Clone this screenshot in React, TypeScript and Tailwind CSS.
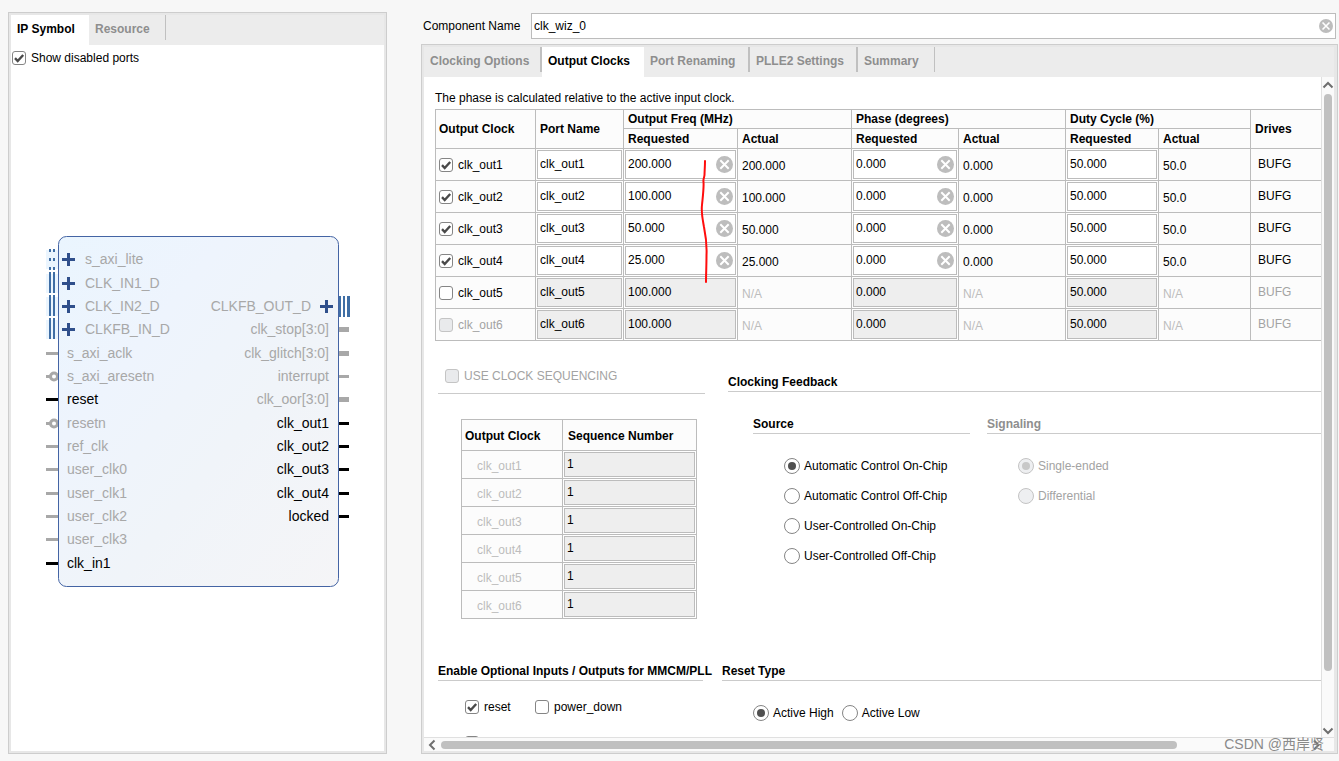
import clsx from 'clsx';
import React, { FC, ReactNode, useId, useState } from 'react';

interface ClockRow {
  name: string;
  checked: boolean;
  enabled: boolean;
  disabledCheck?: boolean;
  freq: string;
}

const clocks: ClockRow[] = [
  { name: 'clk_out1', checked: true, enabled: true, freq: '200.000' },
  { name: 'clk_out2', checked: true, enabled: true, freq: '100.000' },
  { name: 'clk_out3', checked: true, enabled: true, freq: '50.000' },
  { name: 'clk_out4', checked: true, enabled: true, freq: '25.000' },
  { name: 'clk_out5', checked: false, enabled: false, freq: '100.000' },
  { name: 'clk_out6', checked: false, enabled: false, disabledCheck: true, freq: '100.000' },
];

type PortKind = 'bus' | 'dotted' | 'wire' | 'wide' | 'inverted';

interface Port {
  name: string;
  y: number;
  kind: PortKind;
  active?: boolean;
}

const leftPorts: Port[] = [
  { name: 's_axi_lite', y: 23, kind: 'dotted' },
  { name: 'CLK_IN1_D', y: 47, kind: 'bus' },
  { name: 'CLK_IN2_D', y: 70, kind: 'bus' },
  { name: 'CLKFB_IN_D', y: 93, kind: 'bus' },
  { name: 's_axi_aclk', y: 117, kind: 'wire' },
  { name: 's_axi_aresetn', y: 140, kind: 'inverted' },
  { name: 'reset', y: 163, kind: 'wire', active: true },
  { name: 'resetn', y: 187, kind: 'inverted' },
  { name: 'ref_clk', y: 210, kind: 'wire' },
  { name: 'user_clk0', y: 233, kind: 'wire' },
  { name: 'user_clk1', y: 257, kind: 'wire' },
  { name: 'user_clk2', y: 280, kind: 'wire' },
  { name: 'user_clk3', y: 303, kind: 'wire' },
  { name: 'clk_in1', y: 327, kind: 'wire', active: true },
];

const rightPorts: Port[] = [
  { name: 'CLKFB_OUT_D', y: 70, kind: 'bus' },
  { name: 'clk_stop[3:0]', y: 93, kind: 'wide' },
  { name: 'clk_glitch[3:0]', y: 117, kind: 'wide' },
  { name: 'interrupt', y: 140, kind: 'wire' },
  { name: 'clk_oor[3:0]', y: 163, kind: 'wide' },
  { name: 'clk_out1', y: 187, kind: 'wire', active: true },
  { name: 'clk_out2', y: 210, kind: 'wire', active: true },
  { name: 'clk_out3', y: 233, kind: 'wire', active: true },
  { name: 'clk_out4', y: 257, kind: 'wire', active: true },
  { name: 'locked', y: 280, kind: 'wire', active: true },
];

const portColor = (port: Port) => (port.active ? '#000000' : '#a8a8a8');

const Plus: FC<{ x: number; y: number }> = ({ x, y }) => (
  <path d={`M${x - 6} ${y + 0.5}h13M${x + 0.5} ${y - 6}v13`} stroke="#2f4f8b" strokeWidth="3" />
);

const IpSymbol: FC = () => (
  <svg width="305" height="351" viewBox="0 0 305 351" className="shrink-0 text-[14px]" shapeRendering="crispEdges">
    <defs>
      <linearGradient id="block" x1="0" y1="0" x2="1" y2="1">
        <stop offset="0" stopColor="#eaf5fe" />
        <stop offset="0.3" stopColor="#eef4fd" />
        <stop offset="0.6" stopColor="#f0f4f9" />
        <stop offset="1" stopColor="#f5f5f7" />
      </linearGradient>
    </defs>

    {leftPorts.map((port) => (
      <g key={port.name}>
        {(port.kind === 'bus' || port.kind === 'dotted') && (
          <rect x="1" y={port.y - 9} width="12" height="19" fill="#ebf5fe" />
        )}
        {port.kind === 'bus' && (
          <path d={`M5 ${port.y - 11}v21M9 ${port.y - 11}v21`} stroke="#3f6ea5" strokeWidth="2" />
        )}
        {port.kind === 'dotted' && (
          <path
            d={`M5 ${port.y - 10}v21M9 ${port.y - 10}v21`}
            stroke="#3f6ea5"
            strokeWidth="2"
            strokeDasharray="3 6"
          />
        )}
        {port.kind === 'wire' && (
          <rect x="1" y={port.y - 1} width="12" height="3" fill={portColor(port)} />
        )}
        {port.kind === 'inverted' && (
          <g shapeRendering="auto">
            <rect x="1" y={port.y - 1} width="5" height="3" fill={portColor(port)} />
            <circle cx="9" cy={port.y + 0.5} r="3.5" fill="#ffffff" stroke={portColor(port)} strokeWidth="3" />
          </g>
        )}
      </g>
    ))}

    {rightPorts.map((port) => (
      <g key={port.name}>
        {port.kind === 'bus' && (
          <>
            <path d={`M295 ${port.y - 10}v21M299 ${port.y - 10}v21`} stroke="#3f6ea5" strokeWidth="2" />
            <path d={`M303.5 ${port.y - 10}v21`} stroke="#3f6ea5" strokeWidth="3" />
          </>
        )}
        {port.kind === 'wire' && (
          <rect x="294" y={port.y - 1} width="10" height="3" fill={portColor(port)} />
        )}
        {port.kind === 'wide' && (
          <rect x="294" y={port.y - 2} width="10" height="5" fill={portColor(port)} />
        )}
      </g>
    ))}

    <rect
      x="13.5"
      y="0.5"
      width="280"
      height="350"
      rx="8"
      fill="url(#block)"
      stroke="#4464a4"
      shapeRendering="auto"
    />

    {leftPorts.map((port) => {
      const expandable = port.kind === 'bus' || port.kind === 'dotted';
      return (
        <g key={port.name}>
          {expandable && <Plus x={23} y={port.y} />}
          <text x={expandable ? 40 : 22} y={port.y + 5} fill={portColor(port)}>{port.name}</text>
        </g>
      );
    })}
    {rightPorts.map((port) => (
      <g key={port.name}>
        {port.kind === 'bus' && <Plus x={281} y={port.y} />}
        <text x={port.kind === 'bus' ? 266 : 284} y={port.y + 5} textAnchor="end" fill={portColor(port)}>
          {port.name}
        </text>
      </g>
    ))}
  </svg>
);

interface CheckboxProps {
  label?: string;
  ariaLabel?: string;
  checked?: boolean;
  disabled?: boolean;
}

const Checkbox: FC<CheckboxProps> = ({
  label, ariaLabel, checked, disabled,
}) => (
  <label className={clsx('flex h-4 items-center gap-[5px]', disabled && 'text-[#a3a3a3]')}>
    <span className="relative flex">
      <input
        type="checkbox"
        aria-label={ariaLabel}
        defaultChecked={checked}
        disabled={disabled}
        className="peer size-[14px] appearance-none rounded-[3px] border border-[#858585] bg-white disabled:border-[#c4c4c4] disabled:bg-[#e9eaec]"
      />
      <svg
        viewBox="0 0 14 14"
        className="pointer-events-none absolute inset-0 hidden size-[14px] peer-checked:block"
      >
        <path d="M3 7.2L5.7 10L11.2 4" fill="none" stroke="#4a4a4a" strokeWidth="2.4" />
      </svg>
    </span>
    {label}
  </label>
);

interface RadioProps {
  name: string;
  label: string;
  checked?: boolean;
  disabled?: boolean;
}

const Radio: FC<RadioProps> = ({
  name, label, checked, disabled,
}) => (
  <label className={clsx('flex h-4 items-center gap-1', disabled && 'text-[#a3a3a3]')}>
    <span className="relative flex">
      <input
        type="radio"
        name={name}
        defaultChecked={checked}
        disabled={disabled}
        className="peer size-4 appearance-none rounded-full border border-[#858585] bg-white disabled:border-[#c4c4c4] disabled:bg-[#eeeff1]"
      />
      <span className="pointer-events-none absolute inset-1 hidden rounded-full bg-[#505050] peer-checked:block peer-disabled:bg-[#c8c8c8]" />
    </span>
    {label}
  </label>
);

const ClearIcon: FC<{ className: string }> = ({ className }) => (
  <svg viewBox="0 0 17 17" className={className}>
    <circle cx="8.5" cy="8.5" r="8.5" fill="#bdbdbd" />
    <path d="M4.300 4.300L12.700 12.700M12.700 4.300L4.300 12.700" stroke="#ffffff" strokeWidth="2" />
  </svg>
);

interface FieldProps {
  label: string;
  initial: string;
  disabled?: boolean;
  clearable?: boolean;
  className?: string;
}

const Field: FC<FieldProps> = ({
  label, initial, disabled, clearable, className = 'h-[29px]',
}) => {
  const [value, setValue] = useState(initial);

  return (
    <div
      className={clsx(
        'flex items-center border border-[#bcbcbc] pr-[2px]',
        disabled ? 'bg-[#eeeeee]' : 'bg-white',
        className,
      )}
    >
      <input
        type="text"
        aria-label={label}
        value={value}
        disabled={disabled}
        onChange={(e) => setValue(e.target.value)}
        className="h-full w-full min-w-0 bg-transparent pl-[2px] pb-px outline-none"
      />
      {clearable && (
        <button type="button" aria-label={`Clear ${label}`} onClick={() => setValue('')}>
          <ClearIcon className="size-[17px]" />
        </button>
      )}
    </div>
  );
};

const Tab: FC<{ children: ReactNode; active?: boolean; className: string }> = ({
  children, active, className,
}) => (
  <button
    type="button"
    role="tab"
    aria-selected={active}
    className={clsx(
      'flex shrink-0 items-start pl-[6px] text-left font-bold whitespace-nowrap',
      active ? 'bg-white text-black' : 'text-[#8e8e8e]',
      className,
    )}
  >
    <span className="flex h-7 items-center">{children}</span>
  </button>
);

const TabDivider: FC<{ wide?: boolean }> = ({ wide }) => (
  <span className={clsx('h-[25px] shrink-0 bg-[#c0c0c0]', wide ? 'w-[2px]' : 'w-px')} />
);

const SectionTitle: FC<{ children: ReactNode; muted?: boolean }> = ({ children, muted }) => (
  <h3
    className={clsx(
      'border-b border-[#cbcbcb] pb-px font-bold whitespace-nowrap',
      muted && 'text-[#8e8e8e]',
    )}
  >
    {children}
  </h3>
);

const th = 'border border-[#bcbcbc] px-1 text-left font-bold';
const thFirst = 'border border-[#bcbcbc] px-[3px] text-left font-bold';
const tdField = 'border border-[#bcbcbc] bg-white p-px';

const ClocksTable: FC = () => (
  <table className="w-full table-fixed border-collapse border-y border-l border-[#bcbcbc] bg-[#fcfcfc]">
    <colgroup>
      <col className="w-[100px]" />
      <col className="w-[88px]" />
      <col className="w-[114px]" />
      <col className="w-[114px]" />
      <col className="w-[107px]" />
      <col className="w-[107px]" />
      <col className="w-[93px]" />
      <col className="w-[92px]" />
      <col />
    </colgroup>
    <thead>
      <tr className="h-[19px]">
        <th rowSpan={2} className={thFirst}>Output Clock</th>
        <th rowSpan={2} className={th}>Port Name</th>
        <th colSpan={2} className={th}>Output Freq (MHz)</th>
        <th colSpan={2} className={th}>Phase (degrees)</th>
        <th colSpan={2} className={th}>Duty Cycle (%)</th>
        <th rowSpan={2} className={clsx(th, 'border-r-0')}>Drives</th>
      </tr>
      <tr className="h-5">
        <th className={th}>Requested</th>
        <th className={th}>Actual</th>
        <th className={th}>Requested</th>
        <th className={th}>Actual</th>
        <th className={th}>Requested</th>
        <th className={th}>Actual</th>
      </tr>
    </thead>
    <tbody>
      {clocks.map((clock) => {
        const actual = clsx(
          'border border-[#bcbcbc] px-1 pt-[3px]',
          !clock.enabled && 'text-[#bdbdbd]',
        );
        return (
          <tr key={clock.name} className="h-8">
            <td className="border border-[#bcbcbc] px-[3px]">
              <Checkbox label={clock.name} checked={clock.checked} disabled={clock.disabledCheck} />
            </td>
            <td className={tdField}>
              <Field label={`${clock.name} port name`} initial={clock.name} disabled={!clock.enabled} />
            </td>
            <td className={tdField}>
              <Field
                label={`${clock.name} frequency`}
                initial={clock.freq}
                disabled={!clock.enabled}
                clearable={clock.enabled}
              />
            </td>
            <td className={actual}>{clock.enabled ? clock.freq : 'N/A'}</td>
            <td className={tdField}>
              <Field
                label={`${clock.name} phase`}
                initial="0.000"
                disabled={!clock.enabled}
                clearable={clock.enabled}
              />
            </td>
            <td className={actual}>{clock.enabled ? '0.000' : 'N/A'}</td>
            <td className={tdField}>
              <Field label={`${clock.name} duty cycle`} initial="50.000" disabled={!clock.enabled} />
            </td>
            <td className={actual}>{clock.enabled ? '50.0' : 'N/A'}</td>
            <td
              className={clsx(
                'border border-r-0 border-[#bcbcbc] pb-px pl-[7px]',
                !clock.enabled && 'text-[#a3a3a3]',
              )}
            >
              BUFG
            </td>
          </tr>
        );
      })}
    </tbody>
  </table>
);

const SequenceTable: FC = () => (
  <table className="w-[236px] table-fixed border-collapse bg-[#fcfcfc]">
    <colgroup>
      <col className="w-[101px]" />
      <col />
    </colgroup>
    <thead>
      <tr className="h-[31px]">
        <th className={clsx(thFirst, 'pt-px')}>Output Clock</th>
        <th className="border border-[#bcbcbc] px-[5px] pt-px text-left font-bold">Sequence Number</th>
      </tr>
    </thead>
    <tbody>
      {clocks.map((clock) => (
        <tr key={clock.name} className="h-7">
          <td className="border border-[#bcbcbc] pt-[2px] pl-[15px] text-[#bdbdbd]">{clock.name}</td>
          <td className={tdField}>
            <Field label={`${clock.name} sequence number`} initial="1" disabled className="h-[25px]" />
          </td>
        </tr>
      ))}
    </tbody>
  </table>
);

// red pen stroke next to the requested frequencies
const PenMark: FC = () => (
  <svg
    viewBox="0 0 8 126"
    className="pointer-events-none absolute top-[114px] left-[278px] h-[126px] w-2"
  >
    <path
      d="M5 2C5 8 4.500 13 4.500 16C4 20 3 20 3.500 23C4 28 3 36 2 46C1 54 3 62 4 68C6 78 7 86 6.500 96C6.500 106 6 116 6 123"
      fill="none"
      stroke="#ff0d0d"
      strokeWidth="2"
      strokeLinecap="round"
    />
  </svg>
);

const Chevron: FC<{ d: string }> = ({ d }) => (
  <svg viewBox="0 0 12 12" className="size-3 shrink-0">
    <path d={d} fill="none" stroke="#6e6e6e" strokeWidth="2" />
  </svg>
);

const App: FC = () => {
  const nameId = useId();
  const [name, setName] = useState('clk_wiz_0');

  return (
    <div className="flex h-screen gap-[34px] overflow-hidden bg-[#f7f7f7] pt-3 pr-px pb-[7px] pl-2 font-['Liberation_Sans',Arial,sans-serif] text-[12px] leading-4 text-black">
      <section className="flex w-[379px] shrink-0 flex-col border border-[#cdcdcd] bg-[#e7e7e7] p-[2px]">
        <div role="tablist" className="flex h-[30px] shrink-0 bg-[#ececec]">
          <Tab active className="w-[78px]">IP Symbol</Tab>
          <Tab className="w-[76px]">Resource</Tab>
          <TabDivider />
        </div>
        <div className="flex min-h-0 flex-1 flex-col bg-white">
          <div className="flex h-[26px] shrink-0 items-start px-px pt-[5px]">
            <Checkbox label="Show disabled ports" checked />
          </div>
          <div className="flex min-h-0 flex-1 items-center justify-center">
            <IpSymbol />
          </div>
        </div>
      </section>

      <main className="flex min-w-0 flex-1 flex-col gap-[5px] pt-px">
        <div className="flex h-[26px] shrink-0 items-center px-[2px]">
          <label htmlFor={nameId} className="w-[108px] shrink-0">Component Name</label>
          <div className="flex h-full flex-1 items-center border border-[#bcbcbc] bg-white pr-[2px]">
            <input
              id={nameId}
              type="text"
              value={name}
              onChange={(e) => setName(e.target.value)}
              className="h-full min-w-0 flex-1 bg-transparent pl-[2px] outline-none"
            />
            <button type="button" aria-label="Clear component name" onClick={() => setName('')}>
              <ClearIcon className="size-[14px]" />
            </button>
          </div>
        </div>

        <section className="relative flex min-h-0 flex-1 flex-col border border-[#cdcdcd] bg-[#e7e7e7] py-[2px] pr-[3px] pl-[2px]">
          <div role="tablist" className="flex h-[30px] shrink-0 bg-[#ececec]">
            <Tab className="w-[116px]">Clocking Options</Tab>
            <TabDivider wide />
            <Tab active className="w-[102px]">Output Clocks</Tab>
            <Tab className="w-[104px]">Port Renaming</Tab>
            <TabDivider wide />
            <Tab className="w-[106px]">PLLE2 Settings</Tab>
            <TabDivider wide />
            <Tab className="w-[76px]">Summary</Tab>
            <TabDivider />
          </div>

          <div className="flex min-h-0 flex-1">
            <div className="min-w-0 flex-1 overflow-hidden bg-white pt-[13px] pl-[11px]">
              <p>The phase is calculated relative to the active input clock.</p>
              <div className="mt-[3px]"><ClocksTable /></div>

              <div className="mt-[27px] flex gap-[23px] pl-[3px]">
                <div className="w-[267px] shrink-0">
                  <div className="border-b border-[#cbcbcb] pb-[9px] pl-[7px]">
                    <Checkbox label="USE CLOCK SEQUENCING" disabled />
                  </div>
                  <div className="pt-[25px] pl-[23px]"><SequenceTable /></div>
                </div>

                <div className="flex-1 pt-[6px]">
                  <SectionTitle>Clocking Feedback</SectionTitle>
                  <div className="mt-6 flex gap-[17px] pl-[25px]">
                    <div className="w-[217px] shrink-0">
                      <SectionTitle>Source</SectionTitle>
                      <div className="mt-6 flex flex-col gap-[14px] pl-[31px]">
                        <Radio name="source" label="Automatic Control On-Chip" checked />
                        <Radio name="source" label="Automatic Control Off-Chip" />
                        <Radio name="source" label="User-Controlled On-Chip" />
                        <Radio name="source" label="User-Controlled Off-Chip" />
                      </div>
                    </div>
                    <div className="flex-1">
                      <SectionTitle muted>Signaling</SectionTitle>
                      <div className="mt-6 flex flex-col gap-[14px] pl-[31px]">
                        <Radio name="signaling" label="Single-ended" checked disabled />
                        <Radio name="signaling" label="Differential" disabled />
                      </div>
                    </div>
                  </div>
                </div>
              </div>

              <div className="mt-11 flex gap-[19px] pl-[3px]">
                <div className="w-[265px] shrink-0">
                  <SectionTitle>Enable Optional Inputs / Outputs for MMCM/PLL</SectionTitle>
                  <div className="mt-[18px] grid grid-cols-[70px_1fr] gap-y-5 pl-[27px]">
                    <Checkbox label="reset" checked />
                    <Checkbox label="power_down" />
                    <Checkbox ariaLabel="input_clk_stopped" />
                  </div>
                </div>
                <div className="flex-1">
                  <SectionTitle>Reset Type</SectionTitle>
                  <div className="mt-6 flex gap-2 pl-[31px]">
                    <Radio name="reset-type" label="Active High" checked />
                    <Radio name="reset-type" label="Active Low" />
                  </div>
                </div>
              </div>
            </div>

            <div className="flex w-[13px] shrink-0 flex-col items-center border-l border-[#e0e0e0] bg-[#fafafa] pt-[2px]">
              <Chevron d="M1.500 8.500L6 4L10.500 8.500" />
              <div className="mt-[3px] mb-1 w-2 flex-1">
                <div className="h-[92%] rounded-full bg-[#c0c0c0]" />
              </div>
              <Chevron d="M1.500 3.500L6 8L10.500 3.500" />
            </div>
          </div>

          <div className="flex h-[14px] shrink-0 items-center border-t border-[#e0e0e0] bg-[#fafafa] pr-3 pl-[2px]">
            <Chevron d="M8.500 1.500L4 6L8.500 10.500" />
            <div className="mx-[3px] h-2 flex-1">
              <div className="h-full w-[85%] rounded-full bg-[#c0c0c0]" />
            </div>
            <Chevron d="M4 1.500L8.500 6L4 10.500" />
          </div>

          <PenMark />
        </section>
      </main>

      <div className="pointer-events-none absolute right-[15px] bottom-[5px] font-['Liberation_Sans','Noto_Sans_CJK_SC',sans-serif] text-[14px] leading-6 text-[#8a8a8a]">
        CSDN @西岸贤
      </div>
    </div>
  );
};

export default App;
